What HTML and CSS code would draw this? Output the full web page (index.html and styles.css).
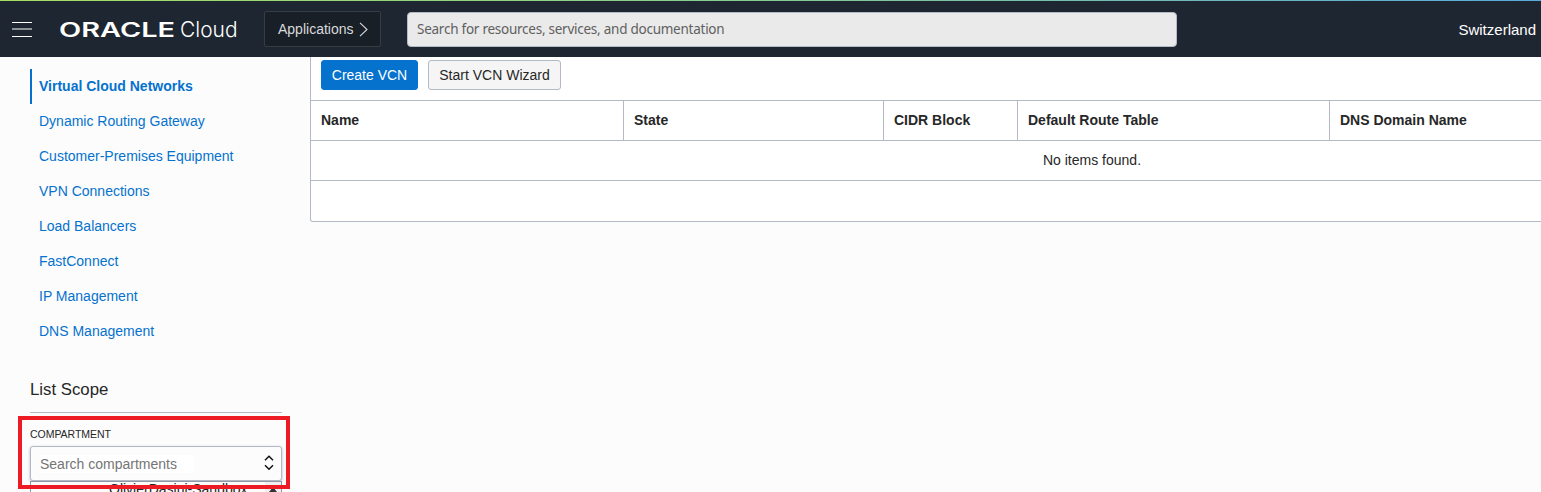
FILE: index.html
```html
<!DOCTYPE html>
<html lang="en">
<head>
<meta charset="utf-8">
<title>Virtual Cloud Networks</title>
<link rel="stylesheet" href="styles.css">
</head>
<body>
<header class="topbar">
  <svg class="menu" width="20" height="15" viewBox="0 0 20 15"><path d="M0 .5h20M0 14.5h20" stroke="#fff"/><path d="M0 7h20" stroke="#8d9297" stroke-width="2"/></svg>
  <svg class="logo" width="180" height="30" viewBox="0 0 180 30">
    <text class="logo-oracle" x="0" y="22.6" textLength="116" lengthAdjust="spacingAndGlyphs">ORACLE</text>
    <text class="logo-cloud" x="121" y="22.8" textLength="57.5" lengthAdjust="spacingAndGlyphs">Cloud</text>
  </svg>
  <button class="apps">Applications<svg width="9" height="15" viewBox="0 0 9 15"><path d="M1 .8l7 6.7-7 6.7" fill="none" stroke="#d8dadb" stroke-width="1.1"/></svg></button>
  <div class="search">Search for resources, services, and documentation</div>
  <div class="region">Switzerland</div>
</header>
<div class="page">
  <aside class="sidebar">
    <nav class="nav">
      <a class="active">Virtual Cloud Networks</a>
      <a>Dynamic Routing Gateway</a>
      <a>Customer-Premises Equipment</a>
      <a>VPN Connections</a>
      <a>Load Balancers</a>
      <a>FastConnect</a>
      <a>IP Management</a>
      <a>DNS Management</a>
    </nav>
    <h2 class="scope">List Scope</h2>
    <div class="label">COMPARTMENT</div>
    <div class="select"><span>Search compartments</span><svg width="10" height="16" viewBox="0 0 10 16"><path d="M1 5.2L5 1.2l4 4M1 10.2l4 4 4-4" fill="none" stroke="#111" stroke-width="1.5"/></svg></div>
    <div class="options"><span>OlivierDasini-Sandbox</span><div class="scroll"><svg width="8" height="5" viewBox="0 0 8 5"><path d="M0 5l4-5 4 5z" fill="#333"/></svg></div></div>
    <div class="highlight"></div>
  </aside>
  <main class="panel">
    <div class="toolbar"><button class="btn primary">Create VCN</button><button class="btn">Start VCN Wizard</button></div>
    <div class="row head"><div>Name</div><div>State</div><div>CIDR Block</div><div>Default Route Table</div><div>DNS Domain Name</div></div>
    <div class="row empty">No items found.</div>
    <div class="row foot"></div>
  </main>
</div>
</body>
</html>
```
FILE: styles.css
```css
* { box-sizing: border-box; }
body { margin: 0; height: 492px; overflow: hidden; background: #fcfcfc; color: #272727; font: 14px "Liberation Sans", Arial, sans-serif; }
button { font: inherit; padding: 0; }
.topbar { display: flex; align-items: center; height: 57px; padding: 1px 5px 0 12px; color: #fff;
  background: linear-gradient(90deg, #a5df62, #86cb93 50%, #5ba9dc) 0 0 / 100% 1px no-repeat, #1e2731; }
.menu { display: block; }
.logo { display: block; margin-left: 27px; }
.logo-oracle { font: 600 19.5px Inter, sans-serif; fill: #fff; }
.logo-cloud { font: 300 22px Inter, sans-serif; fill: #fff; }
.apps { display: flex; align-items: center; gap: 5px; width: 117px; height: 36px; margin-left: 25px; padding-left: 13px; border: 1px solid #343c44; border-radius: 2px; background: #181f27; color: #d8dadb; }
.search { width: 770px; height: 35px; margin-left: 26px; padding-left: 9px; border: 1px solid #b4bbc3; border-radius: 4px; background: #eaeaea; color: #606060; font: 13.5px/33px "Noto Sans", sans-serif; letter-spacing: -.25px; }
.region { margin-left: auto; font-size: 15px; }
.page { display: flex; height: 435px; overflow: hidden; }
.sidebar { position: relative; flex: 0 0 310px; padding: 12px 28px 0 30px; }
.nav { display: flex; flex-direction: column; }
.nav a { height: 35px; padding-left: 9px; line-height: 34px; color: #0572ce; }
.nav .active { padding-left: 7px; border-left: 2px solid #0572ce; font-weight: bold; }
.scope { height: 64px; margin: 0; padding-top: 31px; border-bottom: 1px solid #b3bac5; font-size: 16.8px; font-weight: normal; line-height: 19px; }
.label { height: 33px; padding-top: 15px; font-size: 10.5px; line-height: 13px; letter-spacing: -.03px; }
.select { display: flex; align-items: center; justify-content: space-between; height: 35px; padding: 0 7px 0 9px; border: 1px solid #b3bac5; border-radius: 3px; box-shadow: 0 1px 3px #aeb9c8; color: #757575; background: linear-gradient(#fff, #fff) 9px center / 154px 18px no-repeat, #fcfcfc; }
.select svg { margin-bottom: 2px; }
.options { display: flex; justify-content: space-between; height: 40px; padding-left: 78px; border: 1px solid #8f98a5; line-height: 14px; background: #fcfcfc; }
.scroll { width: 16px; padding: 5px 4px; background: #f0f0f0; line-height: 0; }
.highlight { position: absolute; left: 18px; top: 359px; width: 272px; height: 73px; border: 4px solid #ed1c24; }
.panel { flex: 0 0 1564px; height: 165px; border: 1px solid #b3bac5; border-top: 0; border-radius: 0 0 3px 3px; background: #fff; }
.toolbar { display: flex; gap: 10px; height: 43px; padding: 3px 10px; }
.btn { width: 133px; height: 30px; border: 1px solid #b3bac5; border-radius: 3px; background: #f5f5f5; color: #272727; }
.primary { width: 97px; border-color: #0572ce; background: #0572ce; color: #fff; }
.row { height: 40px; border-top: 1px solid #b3bac5; line-height: 38px; }
.head { display: grid; grid-template-columns: 313px 260px 134px 312px 1fr; font-weight: bold; }
.head div { padding-left: 10px; border-right: 1px solid #b3bac5; }
.head div:last-child { border-right: 0; }
.empty { text-align: center; }
```
